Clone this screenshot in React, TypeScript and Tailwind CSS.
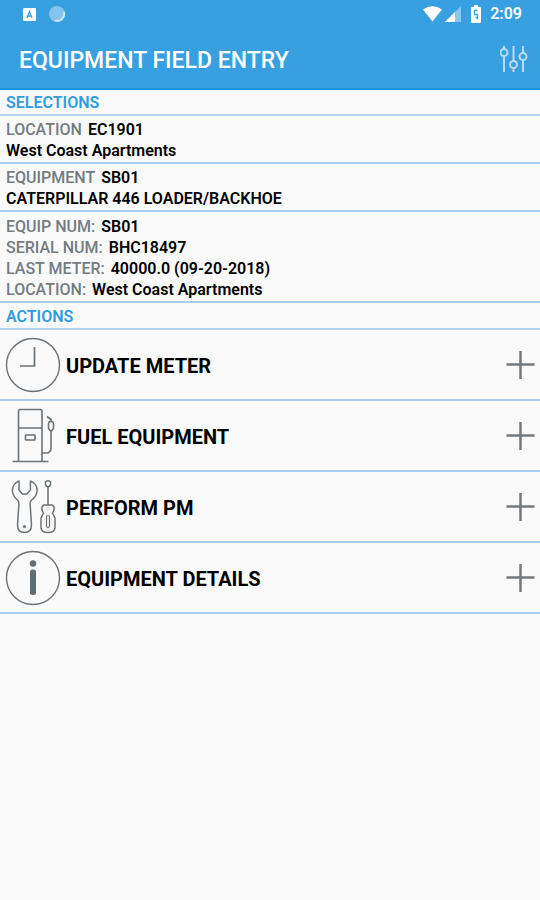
import React from "react"

type Field = { label?: string; value: string }

const location: Field[] = [
    { label: "LOCATION", value: "EC1901" },
    { value: "West Coast Apartments" },
]

const equipment: Field[] = [
    { label: "EQUIPMENT", value: "SB01" },
    { value: "CATERPILLAR 446 LOADER/BACKHOE" },
]

const details: Field[] = [
    { label: "EQUIP NUM:", value: "SB01" },
    { label: "SERIAL NUM:", value: "BHC18497" },
    { label: "LAST METER:", value: "40000.0 (09-20-2018)" },
    { label: "LOCATION:", value: "West Coast Apartments" },
]

const ClockIcon: React.FC = () => (
    <svg className="size-14 shrink-0" viewBox="0 0 56 56" fill="none" stroke="#6b7378" aria-hidden="true">
        <circle cx="28" cy="28" r="26.5" strokeWidth="1.4" />
        <path d="M29.500 10v19H15" strokeWidth="1.7" />
    </svg>
)

const FuelIcon: React.FC = () => (
    <svg className="size-14 shrink-0" viewBox="0 0 56 56" fill="none" stroke="#6b7378" strokeWidth="1.6" aria-hidden="true">
        <path d="M13.5 53V3Q13.500 1.500 15 1.500h20.500Q37 1.500 37 3V53M13.500 20H37M7.500 53.500h36" />
        <rect x="20.500" y="27" width="9.500" height="5" rx="0.500" />
        <path d="M37 45h4q5 0 5-5V23" />
        <path d="M42 8.500l4 3v3M44.500 13.500h3l1 2v5l-2.500 3-2.500-3v-5z" />
    </svg>
)

const ToolsIcon: React.FC = () => (
    <svg className="size-14 shrink-0" viewBox="0 0 56 56" fill="none" stroke="#6b7378" strokeWidth="1.5" strokeLinejoin="round" aria-hidden="true">
        <path d="M14 2C9 4 7 8.500 7.500 12.500c.5 4 3 7 5.500 9 .8 1 1 3 .8 5L12.500 46c0 5 3 7.500 7 7.500s7-2.500 7-7.500l-1.300-19.500c-.2-2 0-4 .8-5 3-2 5.500-5 6-9 .5-4-1.600-8.500-6.600-10.500v9l-3.500 4h-4.500l-3.400-4z" />
        <circle cx="19.500" cy="47.500" r="1.500" fill="#6b7378" stroke="none" />
        <path d="M40.500 3l1-1h3l1 1v3l-1.500 1.500h-2L40.500 6zM43 7.500V26" />
        <path d="M38.500 26h9l1.500 2v3l-1.500 3 2.500 5v9.500c0 3-2.500 5-7 5s-7-2-7-5V39l2.500-5-1.500-3v-3z" />
        <rect x="41.500" y="36.500" width="3" height="12" rx="1.500" strokeWidth="1.200" />
    </svg>
)

const InfoIcon: React.FC = () => (
    <svg className="size-14 shrink-0" viewBox="0 0 56 56" aria-hidden="true">
        <circle cx="28" cy="28" r="26.5" fill="none" stroke="#6b7378" strokeWidth="1.4" />
        <circle cx="28" cy="13.500" r="3.200" fill="#5f6d76" />
        <rect x="25" y="19.500" width="6" height="25.500" rx="2.500" fill="#5f6d76" />
    </svg>
)

const actions = [
    { title: "UPDATE METER", Icon: ClockIcon },
    { title: "FUEL EQUIPMENT", Icon: FuelIcon },
    { title: "PERFORM PM", Icon: ToolsIcon },
    { title: "EQUIPMENT DETAILS", Icon: InfoIcon },
]

const StatusBar: React.FC = () => (
    <div className="flex h-7 items-center justify-between pl-[23px] pr-[18px]">
        <div className="flex items-center gap-[13px]">
            <svg className="size-[13px]" viewBox="0 0 13 13" aria-hidden="true">
                <rect width="13" height="13" rx="1" fill="#fff" />
                <path d="M4 10l2.500-6.500L9 10M4.800 8h3.400" fill="none" stroke="#389fe0" strokeWidth="1.300" />
            </svg>
            <svg className="size-4" viewBox="0 0 16 16" aria-hidden="true">
                <circle cx="8" cy="8" r="8" fill="#84c4ee" />
                <path d="M15 6a7 7 0 0 1-9 8.500" fill="none" stroke="#d5ebf9" strokeWidth="1.800" />
            </svg>
        </div>
        <div className="flex items-center">
            <svg className="h-4 w-[19px]" viewBox="0 0 19 16" aria-hidden="true">
                <path d="M0 3.500Q9.500-3 19 3.500L9.500 15.500z" fill="#fff" />
            </svg>
            <svg className="ml-[3px] size-4" viewBox="0 0 16 16" aria-hidden="true">
                <path d="M16 0v16H0z" fill="#8ac7ef" />
                <path d="M10 6v10H0z" fill="#fff" />
            </svg>
            <svg className="ml-[10px] h-[18px] w-[10px]" viewBox="0 0 10 18" aria-hidden="true">
                <path d="M3 0h4v2h2q1 0 1 1v14q0 1-1 1H1q-1 0-1-1V3q0-1 1-1h2z" fill="#fff" />
                <path d="M6.500 5.500h-3v4h3v4l-2-1.500" fill="none" stroke="#389fe0" strokeWidth="1.300" />
            </svg>
            <span className="ml-[9px] text-base leading-7 font-semibold">2:09</span>
        </div>
    </div>
)

const SectionTitle: React.FC<{ className: string; children: React.ReactNode }> = ({ className, children }) => (
    <h2 className={`border-b-2 border-[#b5d2ee] px-[6px] pb-px text-base leading-[21px] font-semibold text-[#2f9ce0] ${className}`}>
        {children}
    </h2>
)

const FieldGroup: React.FC<{ className: string; fields: Field[] }> = ({ className, fields }) => (
    <div className={`border-b-2 border-[#a9cdee] px-[6px] pb-px text-base leading-[21px] ${className}`}>
        {fields.map((field, i) => (
            <p key={i} className="flex gap-[6px]">
                {field.label && <span className="font-medium text-[#747c82]">{field.label}</span>}
                <span className="font-semibold text-black">{field.value}</span>
            </p>
        ))}
    </div>
)

const App: React.FC = () => {
    return (
        <div className="min-h-screen bg-[#fafafa] font-['Roboto',sans-serif]">
            <header className="border-b-2 border-[#1993dc] bg-[#389fe0] text-white">
                <StatusBar />
                <div className="flex h-[60px] items-center justify-between pl-[19px] pr-3">
                    <h1 className="pt-[6px] text-[23px] leading-7 font-medium">EQUIPMENT FIELD ENTRY</h1>
                    <button type="button" aria-label="Filters" className="cursor-pointer pt-[2px]">
                        <svg className="size-7" viewBox="0 0 28 28" fill="none" stroke="#b5dcf6" strokeWidth="2" aria-hidden="true">
                            <path d="M4 1v3M4 11v16M13.500 1v15M13.500 23v4M23 1v7M23 15v12" />
                            <circle cx="4" cy="7.500" r="3.500" />
                            <circle cx="13.500" cy="19.500" r="3.500" />
                            <circle cx="23" cy="11.500" r="3.500" />
                        </svg>
                    </button>
                </div>
            </header>
            <main>
                <SectionTitle className="pt-[2px]">SELECTIONS</SectionTitle>
                <FieldGroup className="pt-[3px]" fields={location} />
                <FieldGroup className="pt-[3px]" fields={equipment} />
                <FieldGroup className="pt-1" fields={details} />
                <SectionTitle className="pt-[3px]">ACTIONS</SectionTitle>
                <ul>
                    {actions.map(({ title, Icon }) => (
                        <li key={title} className="border-b-2 border-[#a9cdee]">
                            <button type="button" className="flex h-[69px] w-full cursor-pointer items-center px-[5px] text-left">
                                <Icon />
                                <span className="ml-[5px] grow pt-[2px] text-xl font-bold text-black">{title}</span>
                                <svg className="size-[30px]" viewBox="0 0 30 30" fill="none" stroke="#737a7e" strokeWidth="2.500" aria-hidden="true">
                                    <path d="M15.500 1v28M1.500 14.500h28" />
                                </svg>
                            </button>
                        </li>
                    ))}
                </ul>
            </main>
        </div>
    )
}

export default App
